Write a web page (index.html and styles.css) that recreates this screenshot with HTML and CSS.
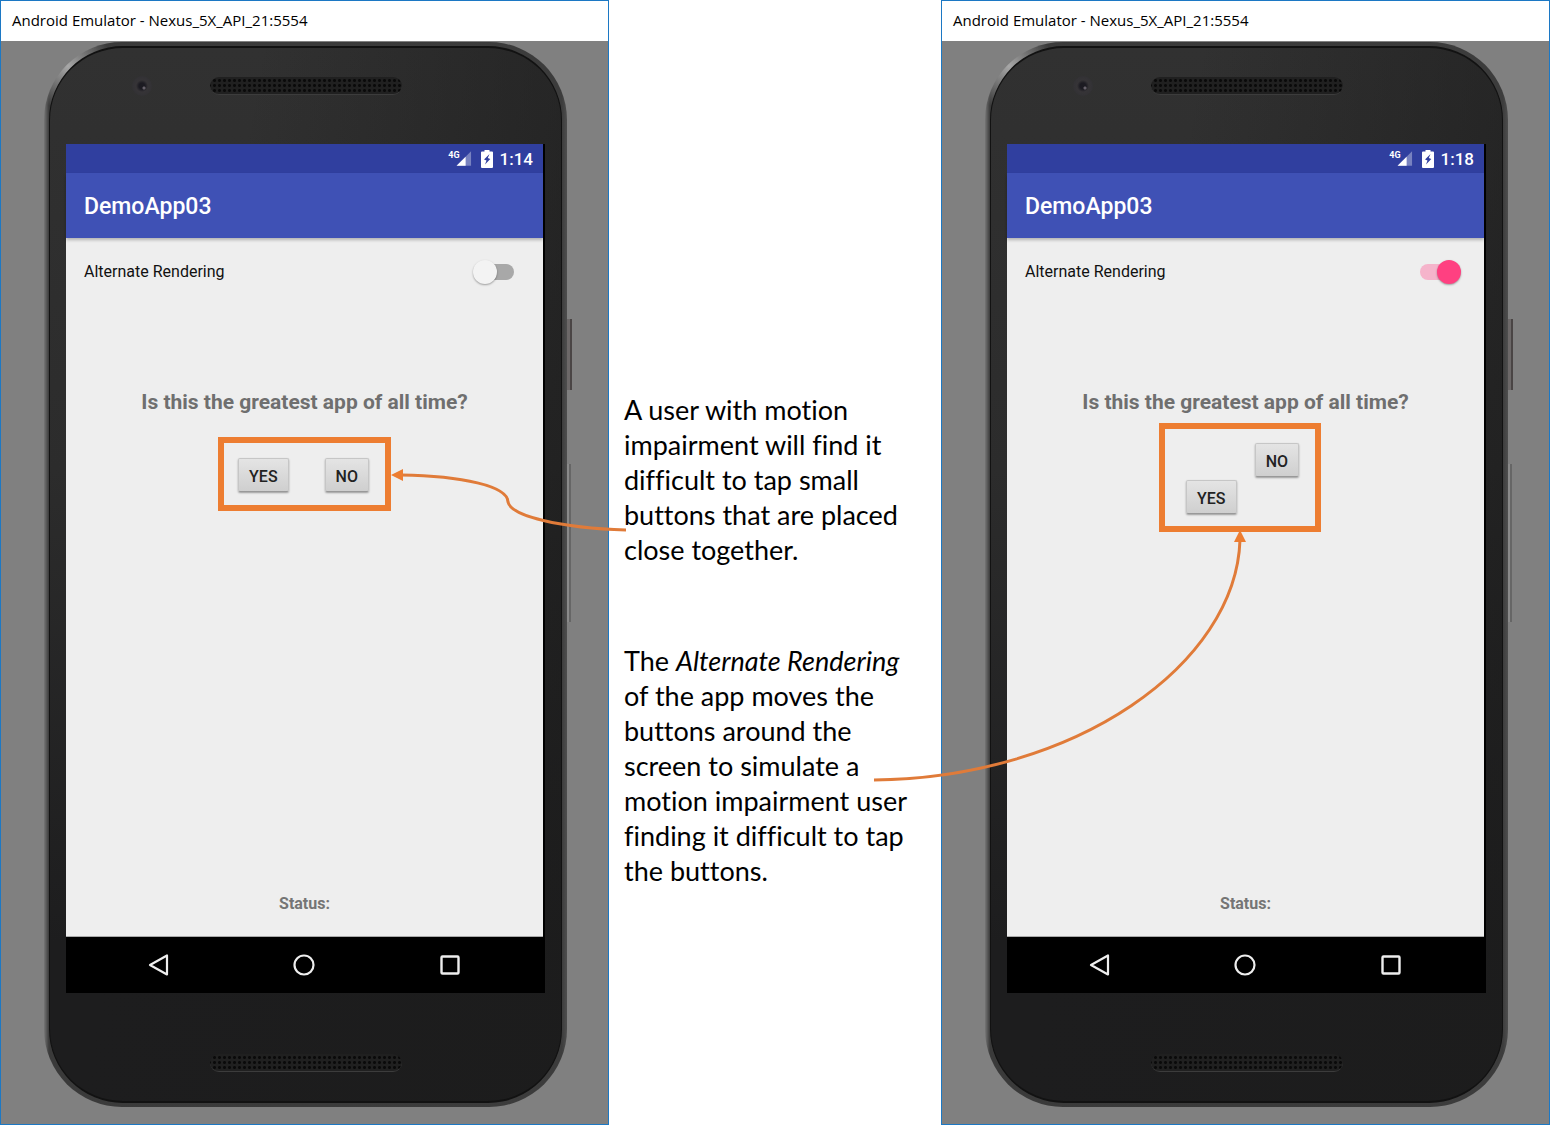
FILE: index.html
```html
<!DOCTYPE html>
<html lang="en">
<head>
<meta charset="utf-8">
<title>DemoApp03 alternate rendering</title>
<link rel="stylesheet" href="styles.css">
</head>
<body>
<svg class="symbols" aria-hidden="true">
  <symbol id="signal" viewBox="0 0 22 18">
    <path d="M21 1v16H5z" fill="#fff" opacity=".35"/>
    <path d="M15 7v10H5z" fill="#fff"/>
  </symbol>
  <symbol id="battery" viewBox="0 0 12 18">
    <path d="M3.500 0h5v1.500H11a1 1 0 0 1 1 1V17a1 1 0 0 1-1 1H1a1 1 0 0 1-1-1V2.500a1 1 0 0 1 1-1h2.500z" fill="#fff"/>
    <path d="M8.500 4L3 9.500l2.500 1-1.500 4L9.300 9 6.800 8z" fill="#303f9f"/>
  </symbol>
  <symbol id="back" viewBox="0 0 24 24"><path d="M20 2.500v19L3 12z" fill="none" stroke="#eee" stroke-width="2.200" stroke-linejoin="round"/></symbol>
  <symbol id="home" viewBox="0 0 24 24"><circle cx="12" cy="12" r="9.500" fill="none" stroke="#eee" stroke-width="2.200"/></symbol>
  <symbol id="recent" viewBox="0 0 24 24"><rect x="3.500" y="3.500" width="17" height="17" rx="1" fill="none" stroke="#eee" stroke-width="2.400"/></symbol>
</svg>
<main class="stage">
  <section class="window">
    <header class="titlebar">Android Emulator - Nexus_5X_API_21:5554</header>
    <div class="desk">
      <div class="phone">
        <span class="side-key power"></span>
        <span class="side-key volume"></span>
        <div class="phone-face">
          <div class="bezel bezel-top"><span class="camera"></span><span class="speaker"></span></div>
          <div class="screen">
            <div class="statusbar">
              <span class="network">4G</span>
              <svg class="signal"><use href="#signal"/></svg>
              <svg class="battery"><use href="#battery"/></svg>
              <time>1:14</time>
            </div>
            <h1 class="toolbar">DemoApp03</h1>
            <div class="content">
              <label class="switch-row">Alternate Rendering <input class="switch" type="checkbox"></label>
              <p class="question">Is this the greatest app of all time?</p>
              <div class="answers answers-row">
                <button class="answer" type="button">YES</button>
                <button class="answer" type="button">NO</button>
              </div>
              <p class="status">Status:</p>
            </div>
            <nav class="navbar">
              <button type="button" aria-label="Back"><svg><use href="#back"/></svg></button>
              <button type="button" aria-label="Home"><svg><use href="#home"/></svg></button>
              <button type="button" aria-label="Recent apps"><svg><use href="#recent"/></svg></button>
            </nav>
          </div>
          <div class="bezel bezel-bottom"><span class="speaker"></span></div>
        </div>
      </div>
    </div>
  </section>

  <section class="notes">
    <p>A user with motion<br>impairment will find it<br>difficult to tap small<br>buttons that are placed<br>close together.</p>
    <p>The <em>Alternate Rendering</em><br>of the app moves the<br>buttons around the<br>screen to simulate a<br>motion impairment user<br>finding it difficult to tap<br>the buttons.</p>
  </section>

  <section class="window">
    <header class="titlebar">Android Emulator - Nexus_5X_API_21:5554</header>
    <div class="desk">
      <div class="phone">
        <span class="side-key power"></span>
        <span class="side-key volume"></span>
        <div class="phone-face">
          <div class="bezel bezel-top"><span class="camera"></span><span class="speaker"></span></div>
          <div class="screen">
            <div class="statusbar">
              <span class="network">4G</span>
              <svg class="signal"><use href="#signal"/></svg>
              <svg class="battery"><use href="#battery"/></svg>
              <time>1:18</time>
            </div>
            <h1 class="toolbar">DemoApp03</h1>
            <div class="content">
              <label class="switch-row">Alternate Rendering <input class="switch" type="checkbox" checked></label>
              <p class="question">Is this the greatest app of all time?</p>
              <div class="answers answers-moved">
                <button class="answer" type="button">NO</button>
                <button class="answer" type="button">YES</button>
              </div>
              <p class="status">Status:</p>
            </div>
            <nav class="navbar">
              <button type="button" aria-label="Back"><svg><use href="#back"/></svg></button>
              <button type="button" aria-label="Home"><svg><use href="#home"/></svg></button>
              <button type="button" aria-label="Recent apps"><svg><use href="#recent"/></svg></button>
            </nav>
          </div>
          <div class="bezel bezel-bottom"><span class="speaker"></span></div>
        </div>
      </div>
    </div>
  </section>

  <svg class="connectors" viewBox="0 0 1550 1125" preserveAspectRatio="none" aria-hidden="true">
    <path class="line" d="M626 530C560 528 511 516 508 502C508 486 462 476 401 475"/>
    <path class="head" d="M391 475l12-6v12z"/>
    <path class="line" d="M874 780C1076 778 1236 664 1240 540"/>
    <path class="head" d="M1240 530l6 12h-12z"/>
  </svg>
</main>
</body>
</html>
```
FILE: styles.css
```css
* { box-sizing: border-box; }

body {
  margin: 0;
  background: #fff;
  color: #000;
  font-family: Roboto, sans-serif;
}

p, h1 { margin: 0; }
button { padding: 0; font-family: inherit; }
.symbols { display: none; }

.stage {
  position: relative;
  display: grid;
  grid-template-columns: 609fr 332fr 609fr;
  min-height: 100vh;
}

/* Emulator window */
.window {
  display: flex;
  flex-direction: column;
  border: 1px solid #1c78c4;
}

.titlebar {
  padding: 0 11px 2px;
  font: 15px/38px "Open Sans", sans-serif;
  white-space: nowrap;
}

.desk {
  flex: 1;
  padding: 1px 41px 17px 43px;
  background: #808080;
}

/* Phone body */
.phone {
  position: relative;
  padding: 4px 5px;
  border-radius: 78px;
  background:
    radial-gradient(circle at 24px 24px, #a8a8a8, transparent 44px),
    linear-gradient(90deg, #767676, #3a3a3a 5px, #3c3c3c 99%, #4e4e4e);
}

.phone-face {
  padding: 0 16px;
  border: 2px solid #121212;
  border-width: 2px 1px;
  border-radius: 74px;
  background:
    linear-gradient(100deg, rgba(28, 28, 28, 0) 30%, rgba(28, 28, 28, 0.7) 90%),
    linear-gradient(#313131, #2c2c2c 40%, #1d1d1e 85%);
}

.side-key {
  position: absolute;
  left: 100%;
  border-right: 2px solid #4a4545;
  background: #6c6868;
}

.power { top: 277px; width: 5px; height: 71px; }
.volume { top: 422px; width: 4px; height: 158px; border-color: #666; background: #8a8a8a; }

.bezel {
  display: grid;
  grid-template-columns: 1fr 192px 1fr;
  align-items: center;
}

.bezel-top { padding: 28px 0 48px; }
.bezel-bottom { padding: 61px 0 29px; }

.camera {
  justify-self: end;
  width: 20px;
  height: 20px;
  margin-right: 58px;
  border-radius: 50%;
  background:
    radial-gradient(circle at 12px 12px, #66616a 1px, transparent 2px),
    radial-gradient(circle, #1c1b22 3px, #363437 6px, #333235 9px);
}

.speaker {
  grid-column: 2;
  height: 18px;
  border-bottom: 1px solid #3c3c3c;
  border-radius: 9px;
  background: radial-gradient(circle, #0a0a0a 1px, transparent 2px) 2px 1px / 5px 5px, #202020;
}

/* App screen */
.screen { border-right: 2px solid #000; background: #eee; }

.statusbar {
  display: flex;
  align-items: center;
  justify-content: flex-end;
  height: 29px;
  padding-right: 10px;
  background: #303f9f;
  color: #fff;
}

.statusbar time { font-size: 17px; font-weight: 500; }
.network { align-self: flex-start; margin: 5px -8px 0 0; font-size: 9px; line-height: 12px; font-weight: 700; }
.signal { width: 20px; height: 17px; }
.battery { width: 12px; height: 18px; margin: 0 7px 0 9px; }

.toolbar {
  position: relative;
  padding: 2px 18px 0;
  background: #3f51b5;
  box-shadow: 0 2px 3px rgba(0, 0, 0, 0.25);
  color: #fff;
  font-size: 23px;
  font-weight: 500;
  line-height: 63px;
}

.content {
  display: grid;
  grid-template-rows: auto auto 130px 1fr;
  min-height: 699px;
  border-bottom: 1px solid #aaa;
}

.switch-row {
  display: flex;
  align-items: center;
  justify-content: space-between;
  padding: 22px 23px 22px 18px;
  color: #111;
  font-size: 16px;
  line-height: 24px;
}

.switch {
  position: relative;
  display: flex;
  align-items: center;
  appearance: none;
  width: 47px;
  height: 24px;
  margin: 0;
}

.switch::before {
  content: "";
  width: 35px;
  height: 16px;
  margin: 0 6px;
  border-radius: 8px;
  background: #a8a8a8;
}

.switch::after {
  content: "";
  position: absolute;
  left: 0;
  width: 24px;
  height: 24px;
  border-radius: 50%;
  background: #f3f3f3;
  box-shadow: 0 1px 2px rgba(0, 0, 0, 0.35);
}

.switch:checked::before { background: #f5b4cb; }
.switch:checked::after { right: 0; left: auto; background: #ff4081; }

.question {
  padding: 82px 0 7px;
  color: #6f6f6f;
  font-size: 21px;
  font-weight: 700;
  line-height: 28px;
  text-align: center;
}

.answers {
  justify-self: center;
  align-self: start;
  display: grid;
  border: 6px solid #ed7d31;
}

.answers-row { grid-template-columns: auto auto; gap: 36px; margin-top: 14px; padding: 15px 16px 13px 14px; }
.answers-moved { gap: 3px; width: 162px; margin-right: 11px; padding: 14px 16px 12px 21px; }
.answers-moved .answer { justify-self: start; }
.answers-moved .answer:first-child { justify-self: end; }

.answer {
  height: 34px;
  padding: 2px 10px 0;
  border: 1px solid #c6c6c6;
  border-bottom-color: #999;
  border-radius: 2px;
  background: linear-gradient(#e4e4e4, #cfcfcf);
  box-shadow: 0 1px 2px rgba(0, 0, 0, 0.35);
  color: #222;
  font-size: 16px;
  font-weight: 500;
}

.status {
  align-self: end;
  padding-bottom: 22px;
  color: #757575;
  font-size: 16px;
  font-weight: 700;
  line-height: 20px;
  text-align: center;
}

.navbar {
  display: grid;
  grid-template-columns: repeat(3, 1fr);
  padding: 0 20px;
  background: #000;
}

.navbar button { height: 56px; border: 0; background: none; }
.navbar svg { display: block; width: 24px; height: 24px; margin: 0 auto; }

/* Explanatory text between the windows */
.notes {
  display: flex;
  flex-direction: column;
  gap: 76px;
  padding: 392px 0 0 15px;
  font: 27px/35px Lato, sans-serif;
  font-variant-ligatures: none;
  white-space: nowrap;
}

/* Arrows from the notes to the highlighted buttons */
.connectors {
  position: absolute;
  inset: 0;
  width: 100%;
  height: 100%;
  pointer-events: none;
}

.line { fill: none; stroke: #e07b39; stroke-width: 3; vector-effect: non-scaling-stroke; }
.head { fill: #ed7d31; }
```
